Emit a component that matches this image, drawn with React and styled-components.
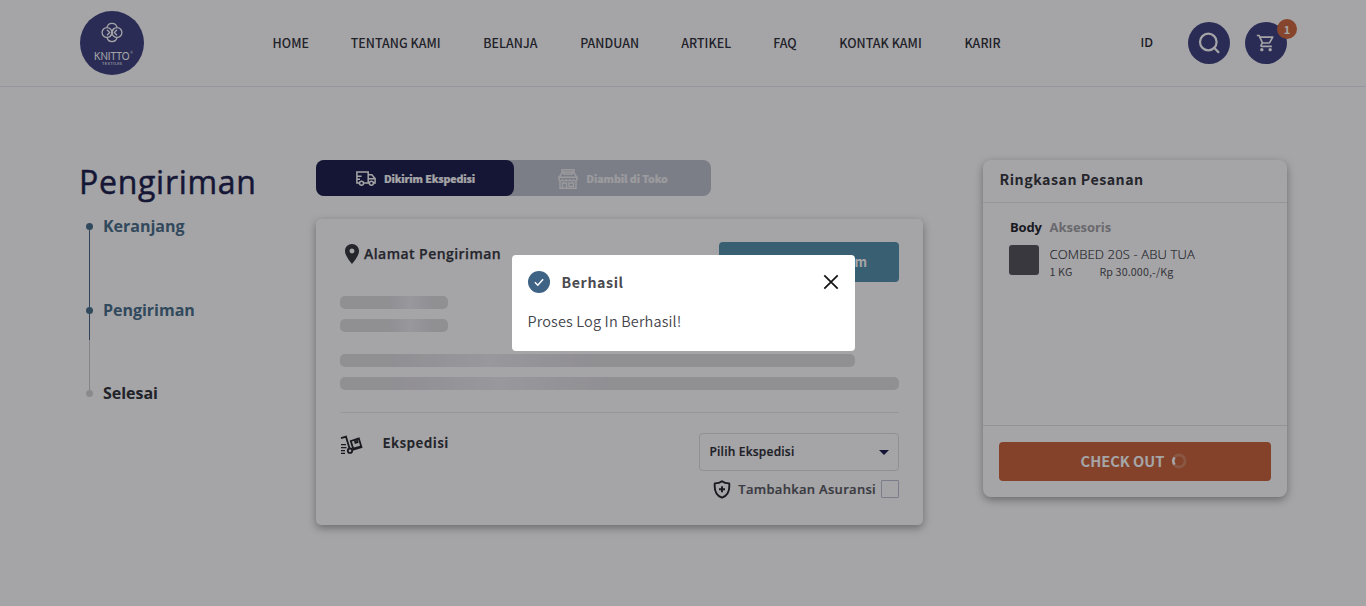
import React from "react";
import styled, { createGlobalStyle } from "styled-components";
import { MdLocationOn, MdOutlineShoppingCart } from "react-icons/md";

const source = `"Source Sans Pro", "Noto Sans CJK SC", sans-serif`;
const open = `"Open Sans", sans-serif`;

const GlobalStyle = createGlobalStyle`
  * { box-sizing: border-box; }
  html, body { margin: 0; height: 100%; overflow: hidden; background: #fff; }
  body { font-family: ${source}; color: #202028; }
`;

const Page = styled.div`
  height: 606px;
  overflow: hidden;
`;

const Header = styled.header`
  display: flex;
  align-items: center;
  height: 87px;
  padding: 0 79px 1px 80px;
  border-bottom: 1px solid #e8e7f3;
`;

const Logo = styled.div`
  width: 64px;
  height: 64px;
  border-radius: 50%;
  background: #333679;
  svg { display: block; }
`;

const Nav = styled.nav`
  display: flex;
  gap: 42px;
  margin-left: 128.5px;
`;

const NavLink = styled.a`
  width: ${(p) => p.$w}px;
  font: 500 12.4px/20px ${source};
  letter-spacing: 0.06px;
  white-space: nowrap;
  color: #23232d;
`;

const Tools = styled.div`
  display: flex;
  align-items: center;
  gap: 15px;
  margin-left: auto;
`;

const Language = styled.span`
  margin-right: 20px;
  font: 600 12px/20px ${open};
  color: #16161f;
`;

const RoundButton = styled.button`
  position: relative;
  display: flex;
  align-items: center;
  justify-content: center;
  width: 42px;
  height: 42px;
  padding: 0;
  border: 0;
  border-radius: 50%;
  background: #333679;
  color: #fff;
`;

const Badge = styled.span`
  position: absolute;
  top: -3px;
  right: -10px;
  width: 20px;
  height: 20px;
  border-radius: 50%;
  background: #cb5f33;
  font: 700 11px/20px ${source};
  text-align: center;
`;

const Main = styled.main`
  display: flex;
  align-items: flex-start;
  padding: 73px 79px 0 80px;
`;

const Side = styled.aside`
  width: 236px;
`;

const Title = styled.h1`
  margin: 0 0 0 -1px;
  font: 500 32px/44px ${open};
  letter-spacing: 0.72px;
  -webkit-text-stroke: 0.5px currentColor;
  color: #0f1243;
`;

const Steps = styled.ol`
  margin: 14px 0 0;
  padding: 0 0 0 6px;
  list-style: none;
`;

const Step = styled.li`
  display: flex;
  gap: 10px;
  height: ${(p) => p.$h}px;
`;

const Rail = styled.div`
  display: flex;
  flex-direction: column;
  align-items: center;
  width: 7px;
  padding-top: 5px;
`;

const Dot = styled.i`
  flex: none;
  width: 7px;
  height: 7px;
  border-radius: 50%;
  background: ${(p) => (p.$on ? "#3f6684" : "#d3d3d5")};
`;

const Line = styled.i`
  width: 1px;
  flex: ${(p) => (p.$len ? `0 0 ${p.$len}px` : 1)};
  margin-bottom: ${(p) => (p.$len ? 0 : -5)}px;
  background: ${(p) => (p.$on ? "#3f5c7c" : "#c9c9cc")};
`;

const StepLabel = styled.span`
  font: 700 16px/17px ${open};
  letter-spacing: -0.02px;
  color: ${(p) => (p.$on ? "#3f6684" : "#25252e")};
`;

const Center = styled.section`
  width: 607px;
`;

const Tabs = styled.div`
  display: flex;
  width: 395px;
  height: 36px;
  border-radius: 8px;
  background: #b9bcca;
`;

const Tab = styled.button`
  display: flex;
  align-items: center;
  justify-content: center;
  gap: 8px;
  width: ${(p) => (p.$active ? 198 : 197)}px;
  padding: 1px 0 0 1px;
  border: 0;
  border-radius: 8px;
  background: ${(p) => (p.$active ? "#0f1243" : "transparent")};
  color: ${(p) => (p.$active ? "#fff" : "#eeeef0")};
  font: 900 10.6px/36px ${source};
  letter-spacing: ${(p) => (p.$active ? -0.15 : -0.1)}px;
  -webkit-text-stroke: 0.2px currentColor;
`;

const Card = styled.div`
  width: 607px;
  height: 306px;
  margin-top: 23px;
  padding: 23px 24px;
  border-radius: 5px;
  background: #fff;
  box-shadow: 0 3px 8px rgba(0, 0, 0, 0.38);
`;

const Row = styled.div`
  display: flex;
  align-items: flex-start;
  justify-content: space-between;
`;

const AddressHeading = styled.h2`
  display: flex;
  align-items: center;
  margin: 0;
  font: 600 14px/24px ${open};
  letter-spacing: 0.45px;
  -webkit-text-stroke: 0.25px currentColor;
  color: #2a2a33;
  svg { stroke: none; }
`;

const CourierHeading = styled.h2`
  display: flex;
  align-items: center;
  gap: 19.5px;
  margin: -3px 0 0;
  font: 700 13.4px/25px ${source};
  letter-spacing: 0.38px;
  color: #2a2a33;
  svg { margin-top: 4px; }
`;

const SendButton = styled.button`
  width: 180px;
  height: 40px;
  padding: 0 32px;
  border: 0;
  border-radius: 4px;
  background: #4b8aa8;
  color: #fff;
  font: 700 13px/40px ${source};
  text-align: right;
  white-space: nowrap;
`;

const Bones = styled.div`
  display: flex;
  flex-direction: column;
  gap: 10px;
  margin-top: ${(p) => p.$top}px;
`;

const Bone = styled.div`
  width: ${(p) => p.$w}px;
  height: 13px;
  border-radius: 5px;
  background: linear-gradient(90deg, #dcdadd ${(p) => p.$from}px, #e9e9ee ${(p) => p.$mid}px, #dcdadd ${(p) => p.$to}px);
`;

const Divider = styled.hr`
  height: 1px;
  margin: 22px 0 20px;
  border: 0;
  background: #e8e7ef;
`;

const Options = styled.div`
  display: flex;
  flex-direction: column;
  align-items: flex-end;
  gap: 9px;
`;

const Select = styled.div`
  display: flex;
  align-items: center;
  justify-content: space-between;
  width: 200px;
  height: 38px;
  padding: 0 9px 0 9.5px;
  border: 1px solid #dcdce0;
  border-radius: 4px;
  font: 600 12px/36px ${open};
  letter-spacing: 0.2px;
  -webkit-text-stroke: 0.2px currentColor;
`;

const Caret = styled.i`
  border: 5px solid transparent;
  border-top-color: #0f1243;
  border-bottom: 0;
`;

const Insurance = styled.label`
  display: flex;
  align-items: center;
  height: 18px;
  font: 600 13px/18px ${open};
  letter-spacing: 0.3px;
  -webkit-text-stroke: 0.2px currentColor;
  color: #4d4d55;
  svg { margin-right: 7px; }
`;

const Check = styled.span`
  width: 18px;
  height: 18px;
  margin-left: 5px;
  border: 1px solid #b9bcd0;
  border-radius: 1px;
`;

const Summary = styled.section`
  display: flex;
  flex-direction: column;
  width: 304px;
  height: 337px;
  margin-left: auto;
  border-radius: 8px;
  background: #fff;
  box-shadow: 0 3px 8px rgba(0, 0, 0, 0.38);
`;

const SummaryTitle = styled.h2`
  margin: 0;
  height: 43px;
  padding: 0 16.5px;
  border-bottom: 1px solid #e6e5f0;
  font: 700 14.2px/39px ${source};
  letter-spacing: 0.52px;
  color: #2a2a33;
`;

const SummaryBody = styled.div`
  flex: 1;
  padding: 15px 26px;
`;

const Kinds = styled.div`
  display: flex;
  gap: 8px;
  margin: -1px 0 0 1px;
  font: 700 13px/20px ${open};
`;

const Kind = styled.span`
  color: ${(p) => (p.$active ? "#16161f" : "#9b9ba0")};
  letter-spacing: ${(p) => (p.$active ? -0.2 : -0.05)}px;
`;

const Item = styled.div`
  display: flex;
  gap: 10.5px;
  margin-top: 8px;
`;

const Swatch = styled.div`
  width: 30px;
  height: 30px;
  border-radius: 3px;
  background: #4b4a50;
`;

const ItemName = styled.div`
  font: 300 13px/19px ${open};
  letter-spacing: 0.14px;
  -webkit-text-stroke: 0.15px currentColor;
  white-space: nowrap;
  color: #22222c;
`;

const ItemMeta = styled.div`
  display: flex;
  gap: 27px;
  padding-top: 1px;
  font: 400 10.7px/14px ${source};
  letter-spacing: 0.13px;
  color: #44444c;
  white-space: nowrap;
`;

const SummaryFoot = styled.div`
  height: 72px;
  padding: 16px;
  border-top: 1px solid #e2e2e5;
`;

const Checkout = styled.button`
  display: flex;
  align-items: center;
  justify-content: center;
  gap: 7px;
  width: 272px;
  height: 39px;
  padding: 0 2px 1px 0;
  border: 0;
  border-radius: 4px;
  background: #c85a2f;
  color: #fff;
  font: 700 14.6px/38px ${source};
`;

const Overlay = styled.div`
  position: fixed;
  inset: 0;
  display: flex;
  align-items: center;
  justify-content: center;
  background: rgba(30, 30, 35, 0.4);
`;

const Dialog = styled.div`
  width: 343px;
  height: 96px;
  padding: 16px;
  border-radius: 4px;
  background: #fff;
`;

const DialogHead = styled.div`
  display: flex;
  align-items: center;
  height: 22px;
`;

const DialogTitle = styled.strong`
  flex: 1;
  margin-left: 12px;
  font: 700 14.2px/22px ${source};
  letter-spacing: 0.6px;
  color: #4a4a50;
`;

const DialogText = styled.p`
  margin: 16px 0 0;
  font: 350 14.5px/24px ${source};
  letter-spacing: 0.15px;
  color: #44444c;
`;

const Brand = () => (
  <svg width="64" height="64" viewBox="0 0 64 64" fill="none" stroke="#fff" strokeWidth="1.3">
    <circle cx="27" cy="21.5" r="4.9" />
    <circle cx="37" cy="21.5" r="4.9" />
    <path d="M27 16.2a5.2 5.2 0 0 1 10 0M27 26.8a5.2 5.2 0 0 0 10 0M27 18.8l2.7 2.7-2.7 2.7M37 18.8l-2.7 2.7 2.7 2.7M34 17.5c-3 2.5-1 5.5-4 8" />
    <g fill="#fff" stroke="none" fontFamily="Lato, sans-serif">
      <text x="14" y="48.6" fontSize="12" textLength="35.5" lengthAdjust="spacingAndGlyphs">KNITTO</text>
      <text x="50.2" y="42.5" fontSize="3">®</text>
      <text x="22" y="54.3" fontSize="4" textLength="20">TEXTILES</text>
    </g>
  </svg>
);

const SearchIcon = () => (
  <svg width="22" height="22" viewBox="0 0 22 22" fill="none" stroke="#fff" strokeWidth="2.2">
    <circle cx="10.3" cy="10" r="8.3" />
    <path d="M16.1 15.8l4.3 4.3" strokeLinecap="round" />
  </svg>
);

const TruckIcon = () => (
  <svg width="20" height="16" viewBox="0 0 20 16" fill="none" stroke="currentColor" strokeWidth="1.5">
    <path d="M3 12H.9V1h11.3v11H8M12.2 3.7h3.6l3.3 3.9V12h-1.3M12.2 12h.8M12.2 7.8h6.7M1 5.2h4.6M1 8.2h3" />
    <circle cx="5.5" cy="12.2" r="2" />
    <circle cx="15.4" cy="12.2" r="2" />
  </svg>
);

const StoreIcon = () => (
  <svg width="20" height="20" viewBox="0 0 20 20" fill="none" stroke="currentColor" strokeWidth="1.4">
    <path d="M4 4V.7h12V4M5.5 3h9v2h-9zM4 4L1 8.2h18L16 4M1 8.2v2c0 2.2 3.4 2.2 3.6 0 .2 2.2 3.4 2.2 3.6 0 .2 2.2 3.4 2.2 3.6 0 .2 2.2 3.4 2.2 3.6 0 .2 2.2 3.6 2.2 3.6 0v-2M2 12v7.3h16V12M4.5 19v-5h4v5M11 14h4.5v3.4H11z" />
  </svg>
);

const DollyIcon = () => (
  <svg width="23" height="20" viewBox="0 0 23 20" fill="none" stroke="#16161f" strokeWidth="1.8">
    <path d="M1 3.2l5-1.5 3.6 12M12.3 15l10-3.1M10.8 6l8-2.5 2.4 7.8-8 2.4zM14.7 5.2l.8 2.6 2-.6-.8-2.6" />
    <path d="M1 9.7h5M1 12.7h5.5M1 15.7h4M1 18.3h4" strokeWidth="1.3" />
    <circle cx="10" cy="15.7" r="2.2" />
  </svg>
);

const ShieldIcon = () => (
  <svg width="18" height="19" viewBox="0 0 18 19" fill="none" stroke="#16161f" strokeWidth="1.9">
    <path d="M9 1.2C7 3 4.4 3.4 1.8 3.4 1.2 9.6 2 15.3 9 17.7c7-2.4 7.8-8.1 7.2-14.3C13.6 3.4 11 3 9 1.2z" strokeLinejoin="round" />
    <path d="M9 6.2v6M6 9.2h6" />
  </svg>
);

const Spinner = () => (
  <svg width="16" height="16" viewBox="0 0 16 16" fill="none" strokeWidth="2.8">
    <circle cx="8" cy="8" r="6" stroke="#fff" strokeOpacity="0.22" />
    <path d="M3.6 11.6A6 6 0 0 1 3.6 4.4" stroke="#fff" strokeWidth="2.5" />
  </svg>
);

const SuccessIcon = () => (
  <svg width="22" height="22" viewBox="0 0 22 22" fill="none">
    <circle cx="11" cy="11" r="11" fill="#3f6384" />
    <path d="M6.9 11.3l2.9 2.9 5.3-5.9" stroke="#fff" strokeWidth="1.5" />
  </svg>
);

const CloseIcon = () => (
  <svg width="16" height="16" viewBox="0 0 16 16" stroke="#111" strokeWidth="1.7">
    <path d="M1.3 1.3l13.4 13.4M14.7 1.3L1.3 14.7" />
  </svg>
);

const links = [
  ["HOME", 36.2], ["TENTANG KAMI", 90.6], ["BELANJA", 54.9], ["PANDUAN", 59],
  ["ARTIKEL", 50], ["FAQ", 24], ["KONTAK KAMI", 83.3], ["KARIR", 37],
];

export default function App() {
  return (
    <Page>
      <GlobalStyle />
      <Header>
        <Logo><Brand /></Logo>
        <Nav>
          {links.map(([label, w]) => <NavLink key={label} $w={w}>{label}</NavLink>)}
        </Nav>
        <Tools>
          <Language>ID</Language>
          <RoundButton><SearchIcon /></RoundButton>
          <RoundButton><MdOutlineShoppingCart size={20} /><Badge>1</Badge></RoundButton>
        </Tools>
      </Header>
      <Main>
        <Side>
          <Title>Pengiriman</Title>
          <Steps>
            <Step $h={84}>
              <Rail><Dot $on /><Line $on /></Rail>
              <StepLabel $on>Keranjang</StepLabel>
            </Step>
            <Step $h={83}>
              <Rail><Dot $on /><Line $on $len={26} /><Line /></Rail>
              <StepLabel $on>Pengiriman</StepLabel>
            </Step>
            <Step $h={20}>
              <Rail><Dot /></Rail>
              <StepLabel>Selesai</StepLabel>
            </Step>
          </Steps>
        </Side>
        <Center>
          <Tabs>
            <Tab $active><TruckIcon />Dikirim Ekspedisi</Tab>
            <Tab><StoreIcon />Diambil di Toko</Tab>
          </Tabs>
          <Card>
            <Row>
              <AddressHeading><MdLocationOn size={24} />Alamat Pengiriman</AddressHeading>
              <SendButton>Alamat Kirim</SendButton>
            </Row>
            <Bones $top={14}>
              <Bone $w={108} $from={48} $mid={70} $to={94} />
              <Bone $w={108} $from={48} $mid={70} $to={94} />
            </Bones>
            <Bones $top={22}>
              <Bone $w={515} $from={45} $mid={150} $to={255} />
              <Bone $w={559} $from={50} $mid={160} $to={275} />
            </Bones>
            <Divider />
            <Row>
              <CourierHeading><DollyIcon />Ekspedisi</CourierHeading>
              <Options>
                <Select>Pilih Ekspedisi<Caret /></Select>
                <Insurance><ShieldIcon />Tambahkan Asuransi<Check /></Insurance>
              </Options>
            </Row>
          </Card>
        </Center>
        <Summary>
          <SummaryTitle>Ringkasan Pesanan</SummaryTitle>
          <SummaryBody>
            <Kinds><Kind $active>Body</Kind><Kind>Aksesoris</Kind></Kinds>
            <Item>
              <Swatch />
              <div>
                <ItemName>COMBED 20S - ABU TUA</ItemName>
                <ItemMeta><span>1 KG</span><span>Rp 30.000,-/Kg</span></ItemMeta>
              </div>
            </Item>
          </SummaryBody>
          <SummaryFoot>
            <Checkout>CHECK OUT<Spinner /></Checkout>
          </SummaryFoot>
        </Summary>
      </Main>
      <Overlay>
        <Dialog>
          <DialogHead>
            <SuccessIcon />
            <DialogTitle>Berhasil</DialogTitle>
            <CloseIcon />
          </DialogHead>
          <DialogText>Proses Log In Berhasil!</DialogText>
        </Dialog>
      </Overlay>
    </Page>
  );
}
